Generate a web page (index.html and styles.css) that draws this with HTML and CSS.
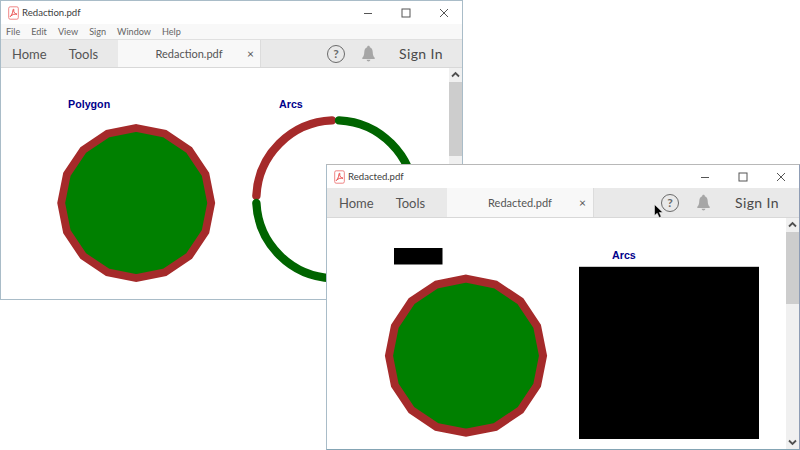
FILE: index.html
```html
<!DOCTYPE html>
<html lang="en">
<head>
<meta charset="utf-8">
<title>Redaction</title>
<link rel="stylesheet" href="styles.css">
</head>
<body>
<div class="desktop">
  <section class="window window-back">
    <header class="titlebar">
      <svg class="pdf-icon" viewBox="0 0 12 15"><rect x="0.75" y="0.75" width="10.5" height="13.5" rx="1.6" class="pdf-sheet"/><path d="M2.2 11.6C3.6 10.6 5.2 7.6 5.5 4.2C5.6 2.8 6.5 3 6.3 4.4C6 6.6 7.4 8.4 9.8 8.8C7.4 8.4 4.6 9 2.6 11.2" class="pdf-mark"/></svg>
      <span class="title-text">Redaction.pdf</span>
      <div class="controls">
        <svg class="ctl" viewBox="0 0 10 10"><path d="M1 5.5H9"/></svg>
        <svg class="ctl" viewBox="0 0 10 10"><rect x="1" y="1" width="8" height="8"/></svg>
        <svg class="ctl" viewBox="0 0 10 10"><path d="M1 1L9 9M9 1L1 9"/></svg>
      </div>
    </header>
    <nav class="menubar"><span>File</span><span>Edit</span><span>View</span><span>Sign</span><span>Window</span><span>Help</span></nav>
    <div class="tabbar tabbar-back">
      <div class="nav-links nav-links-back"><span>Home</span><span>Tools</span></div>
      <div class="doc-tab doc-tab-back"><span></span><span class="doc-name">Redaction.pdf</span><span class="doc-close">×</span></div>
      <div class="tab-tools tab-tools-back">
        <span class="help-ring">?</span>
        <svg class="bell" viewBox="0 0 16 18"><path d="M8 0.8C7 0.8 6.6 1.5 6.6 2.3C4.4 3 3.6 5 3.5 7.5C3.4 10.5 2.8 12.2 1.4 13.6V14.8H14.6V13.6C13.2 12.2 12.6 10.5 12.5 7.5C12.4 5 11.6 3 9.4 2.3C9.4 1.5 9 0.8 8 0.8ZM6 15.6C6.2 16.8 7 17.4 8 17.4C9 17.4 9.8 16.8 10 15.6Z"/></svg>
        <span class="sign-in">Sign In</span>
      </div>
    </div>
    <div class="viewer">
      <svg class="page page-back" viewBox="0 0 448 231">
        <text x="67" y="40" class="label">Polygon</text>
        <text x="278" y="40" class="label">Arcs</text>
        <polygon class="poly" transform="translate(135.2 135)" points="0,-75 28.7,-69.29 53.03,-53.03 69.29,-28.7 75,0 69.29,28.7 53.03,53.03 28.7,69.29 0,75 -28.7,69.29 -53.03,53.03 -69.29,28.7 -75,0 -69.29,-28.7 -53.03,-53.03 -28.7,-69.29"/>
        <path class="arc arc-red" d="M255.37 128A79 79 0 0 1 331 52.37"/>
        <path class="arc arc-green" d="M338 52.37A79 79 0 0 1 413.2 128"/>
        <path class="arc arc-green" d="M255.37 135A79 79 0 0 0 331 210.2"/>
      </svg>
      <div class="scrollbar">
        <svg class="scroll-arrow" viewBox="0 0 13 14"><path d="M3 8.5L6.5 5L10 8.5"/></svg>
        <div class="thumb thumb-back"></div>
      </div>
    </div>
  </section>

  <section class="window window-front">
    <header class="titlebar">
      <svg class="pdf-icon" viewBox="0 0 12 15"><rect x="0.75" y="0.75" width="10.5" height="13.5" rx="1.6" class="pdf-sheet"/><path d="M2.2 11.6C3.6 10.6 5.2 7.6 5.5 4.2C5.6 2.8 6.5 3 6.3 4.4C6 6.6 7.4 8.4 9.8 8.8C7.4 8.4 4.6 9 2.6 11.2" class="pdf-mark"/></svg>
      <span class="title-text">Redacted.pdf</span>
      <div class="controls">
        <svg class="ctl" viewBox="0 0 10 10"><path d="M1 5.5H9"/></svg>
        <svg class="ctl" viewBox="0 0 10 10"><rect x="1" y="1" width="8" height="8"/></svg>
        <svg class="ctl" viewBox="0 0 10 10"><path d="M1 1L9 9M9 1L1 9"/></svg>
      </div>
    </header>
    <div class="tabbar tabbar-front">
      <div class="nav-links nav-links-front"><span>Home</span><span>Tools</span></div>
      <div class="doc-tab doc-tab-front"><span></span><span class="doc-name">Redacted.pdf</span><span class="doc-close doc-close-front">×</span></div>
      <div class="tab-tools tab-tools-front">
        <span class="help-ring">?</span>
        <svg class="bell" viewBox="0 0 16 18"><path d="M8 0.8C7 0.8 6.6 1.5 6.6 2.3C4.4 3 3.6 5 3.5 7.5C3.4 10.5 2.8 12.2 1.4 13.6V14.8H14.6V13.6C13.2 12.2 12.6 10.5 12.5 7.5C12.4 5 11.6 3 9.4 2.3C9.4 1.5 9 0.8 8 0.8ZM6 15.6C6.2 16.8 7 17.4 8 17.4C9 17.4 9.8 16.8 10 15.6Z"/></svg>
        <span class="sign-in">Sign In</span>
      </div>
    </div>
    <div class="viewer">
      <svg class="page page-front" viewBox="0 0 459 231">
        <rect x="67" y="30" width="48.500" height="16.500"/>
        <text x="285" y="41" class="label">Arcs</text>
        <rect x="252" y="48.800" width="180" height="172.200"/>
        <polygon class="poly" transform="translate(139 137.700) scale(1.027)" points="0,-75 28.7,-69.29 53.03,-53.03 69.29,-28.7 75,0 69.29,28.7 53.03,53.03 28.7,69.29 0,75 -28.7,69.29 -53.03,53.03 -69.29,28.7 -75,0 -69.29,-28.7 -53.03,-53.03 -28.7,-69.29"/>
      </svg>
      <div class="scrollbar">
        <svg class="scroll-arrow" viewBox="0 0 13 14"><path d="M3 8.500L6.500 5L10 8.500"/></svg>
        <div class="thumb thumb-front"></div>
        <svg class="scroll-arrow arrow-end" viewBox="0 0 13 14"><path d="M3 5.500L6.500 9L10 5.500"/></svg>
      </div>
    </div>
  </section>

  <svg class="cursor" viewBox="0 0 10 14"><path d="M0.5 0.5V11.500L3.200 9.200L5.200 13.500L7.200 12.600L5.300 8.500H8.800Z"/></svg>
</div>
</body>
</html>
```

FILE: styles.css
```css
* { box-sizing: border-box; }
html, body { margin: 0; padding: 0; background: #fff; }
body { font-family: Lato, Roboto, sans-serif; color: #505050; }

.desktop { position: relative; width: 800px; height: 450px; overflow: hidden; background: #fff; }

.window { position: absolute; display: flex; flex-direction: column; background: #fff; border: 1px solid #a9bcc8; }
.window-back { left: 0; top: 0; width: 463px; height: 300px; }
.window-front { left: 326px; top: 164px; width: 474px; height: 286px; border-top-color: #b8b8b8; border-right-color: #8f9db5; border-bottom-color: #84a4b4; }

.titlebar { flex: none; height: 23px; display: flex; align-items: center; padding-left: 7px; background: #fff; }
.pdf-icon { width: 11px; height: 14px; margin-right: 3px; flex: none; }
.pdf-sheet { fill: #fff; stroke: #ee7b7b; stroke-width: 1; }
.pdf-mark { fill: none; stroke: #e83f3f; stroke-width: 1; }
.title-text { font-size: 9.600px; color: #404040; }
.controls { margin-left: auto; display: flex; gap: 28px; padding-right: 13px; }
.ctl { width: 10px; height: 10px; fill: none; stroke: #555; stroke-width: 1; }

.menubar { flex: none; height: 15px; display: flex; align-items: center; gap: 11px; padding-left: 5px; background: #f8f8f8; font-size: 9.100px; color: #666; }

.tabbar { flex: none; display: flex; background: #e9e9e9; border-top: 1px solid #e0e0e0; border-bottom: 1px solid #d8d8d8; }
.tabbar-back { height: 29px; }
.tabbar-front { height: 30px; border-top: 0; }

.nav-links { display: flex; align-items: center; gap: 22px; font-size: 13px; color: #555; flex: none; }
.nav-links-back { width: 117px; padding-left: 11px; }
.nav-links-front { width: 120px; padding-left: 12px; }

.doc-tab { flex: none; display: grid; grid-template-columns: 1fr auto 1fr; align-items: center; background: #f8f8f8; border-right: 1px solid #dcdcdc; font-size: 11px; color: #555; }
.doc-tab-back { width: 143px; }
.doc-tab-front { width: 147px; }
.doc-close { justify-self: end; padding-right: 6px; font-size: 12px; color: #555; }
.doc-close-front { padding-right: 7px; }

.tab-tools { margin-left: auto; display: flex; align-items: center; }
.tab-tools-back { padding-right: 19px; }
.tab-tools-front { padding-right: 20px; }
.help-ring { width: 18px; height: 18px; border: 1.500px solid #6a6a6a; border-radius: 50%; display: flex; align-items: center; justify-content: center; font-size: 12px; font-weight: 700; color: #6a6a6a; }
.bell { width: 15px; height: 17px; fill: #a6a6a6; margin-left: 16px; }
.tab-tools-front .bell { margin-left: 17px; }
.sign-in { margin-left: 23px; font-size: 14px; font-weight: 400; letter-spacing: 0.4px; color: #4a4a4a; }
.tab-tools-front .sign-in { margin-left: 24px; }

.viewer { flex: 1; min-height: 0; display: flex; }
.page { flex: 1; min-width: 0; display: block; height: 100%; }
.label { font-family: "Liberation Sans", Arial, sans-serif; font-size: 10.700px; font-weight: 700; fill: #00008b; }
.poly { fill: #008000; stroke: #a52a2a; stroke-width: 7.800; stroke-linejoin: miter; }
.arc { fill: none; stroke-width: 8.400; stroke-linecap: round; }
.arc-red { stroke: #a52a2a; }
.arc-green { stroke: #006400; }

.scrollbar { flex: none; width: 13px; display: flex; flex-direction: column; background: #f0f0f0; }
.scroll-arrow { flex: none; width: 13px; height: 14px; fill: none; stroke: #505050; stroke-width: 1.800; }
.arrow-end { margin-top: auto; }
.thumb { flex: none; background: #cdcdcd; }
.thumb-back { height: 74px; }
.thumb-front { height: 72px; }

.cursor { position: absolute; left: 654px; top: 204px; width: 10px; height: 14px; fill: #000; stroke: #fff; stroke-width: 0.500; }
```
